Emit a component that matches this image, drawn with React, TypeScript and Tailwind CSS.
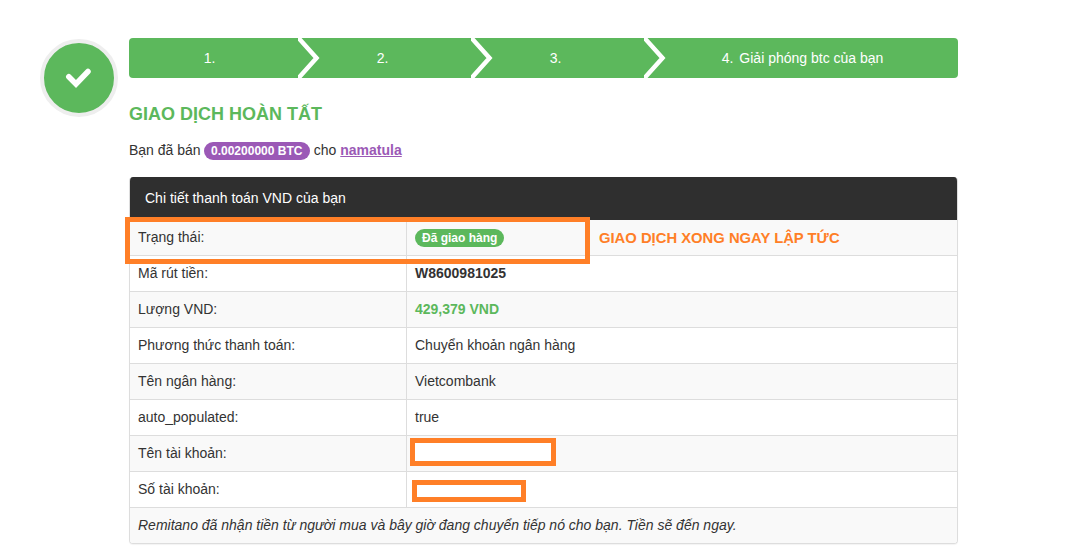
const STEPS = ["1.", "2.", "3."];

const rows = [
  { label: "Trạng thái:", value: <span className="inline-block rounded-full bg-[#5cb85c] px-[7px] text-[12px] leading-[18px] font-bold text-white">Đã giao hàng</span> },
  { label: "Mã rút tiền:", value: <b>W8600981025</b> },
  { label: "Lượng VND:", value: <b className="text-[#5cb85c]">429,379 VND</b> },
  { label: "Phương thức thanh toán:", value: "Chuyển khoản ngân hàng" },
  { label: "Tên ngân hàng:", value: "Vietcombank" },
  { label: "auto_populated:", value: "true" },
  { label: "Tên tài khoản:", value: null },
  { label: "Số tài khoản:", value: null },
];

function Chevron() {
  return (
    <svg className="absolute top-0 right-[-20px] z-10" width="24" height="40" viewBox="0 0 24 40">
      <polyline points="-1.3,-2 18.5,20 -1.3,42" fill="none" stroke="#fff" strokeWidth="4.5" />
    </svg>
  );
}

export default function App() {
  return (
    <div className="relative h-[555px] w-[1072px] overflow-hidden bg-white pt-[38px] pl-[40px] font-['Liberation_Sans',Arial,sans-serif] text-[14px] text-[#333]">
      <div className="flex items-start">
        {/* status icon */}
        <div className="mt-px flex h-[78px] w-[78px] shrink-0 items-center justify-center rounded-full border-4 border-[#eeeeee] bg-[#5cb85c]">
          <svg width="30" height="26" viewBox="0 0 30 26">
            <polyline points="4.8,11.7 12,19 24,6.5" fill="none" stroke="#fff" strokeWidth="5.5" strokeLinecap="round" />
          </svg>
        </div>

        <div className="ml-[11px] w-[829px]">
          <div className="flex h-10 overflow-hidden rounded-[4px] bg-[#5cb85c] text-white">
            {STEPS.map((s) => (
              <div key={s} className="relative flex w-[173px] shrink-0 items-center justify-center pr-3">
                {s}
                <Chevron />
              </div>
            ))}
            <div className="flex flex-1 items-center justify-center pr-px">
              <span className="mr-[6px]">4.</span>Giải phóng btc của bạn
            </div>
          </div>

          <h3 className="mt-[26px] text-[18px] leading-[20px] font-bold text-[#5cb85c]">GIAO DỊCH HOÀN TẤT</h3>

          <p className="mt-4 leading-[20px]">
            Bạn đã bán{" "}
            <span className="ml-[-1px] inline-block rounded-full bg-[#9b59b6] px-[7.5px] text-[12px] leading-[18px] font-bold text-white">0.00200000 BTC</span>{" "}
            cho{" "}
            <a className="font-bold text-[#9b59b6] underline" href="#">namatula</a>
          </p>

          <div className="mt-[17px] overflow-hidden rounded-[4px] border border-t-0 border-[#ddd] shadow-[0_1px_1px_rgba(0,0,0,0.05)]">
            <div className="flex h-[43px] items-center bg-[#2f2f2f] pl-[15px] text-white">Chi tiết thanh toán VND của bạn</div>
            {rows.map((r, i) => (
              <div key={r.label} className={`flex h-9 border-b border-[#ddd] ${i % 2 === 0 ? "bg-[#f9f9f9]" : "bg-white"}`}>
                <div className="flex w-[277px] items-center border-r border-[#ddd] pl-2">{r.label}</div>
                <div className="flex flex-1 items-center pl-2">{r.value}</div>
              </div>
            ))}
            <div className="flex h-[35px] items-center bg-[#f9f9f9] pl-2 italic">Remitano đã nhận tiền từ người mua và bây giờ đang chuyển tiếp nó cho bạn. Tiền sẽ đến ngay.</div>
          </div>
        </div>
      </div>

      {/* orange annotations drawn over the screenshot */}
      <div className="absolute top-[217px] left-[125px] h-[47px] w-[465px] border-[5px] border-[#ff7f27]" />
      <div className="absolute top-[228px] left-[599px] text-[14.8px] leading-[20px] font-bold text-[#ff7f27]">GIAO DỊCH XONG NGAY LẬP TỨC</div>
      <div className="absolute top-[438px] left-[410px] h-[28px] w-[146px] border-[5px] border-[#ff7f27] bg-white" />
      <div className="absolute top-[480px] left-[412px] h-[22px] w-[114px] border-[5px] border-[#ff7f27] bg-white" />
    </div>
  );
}
